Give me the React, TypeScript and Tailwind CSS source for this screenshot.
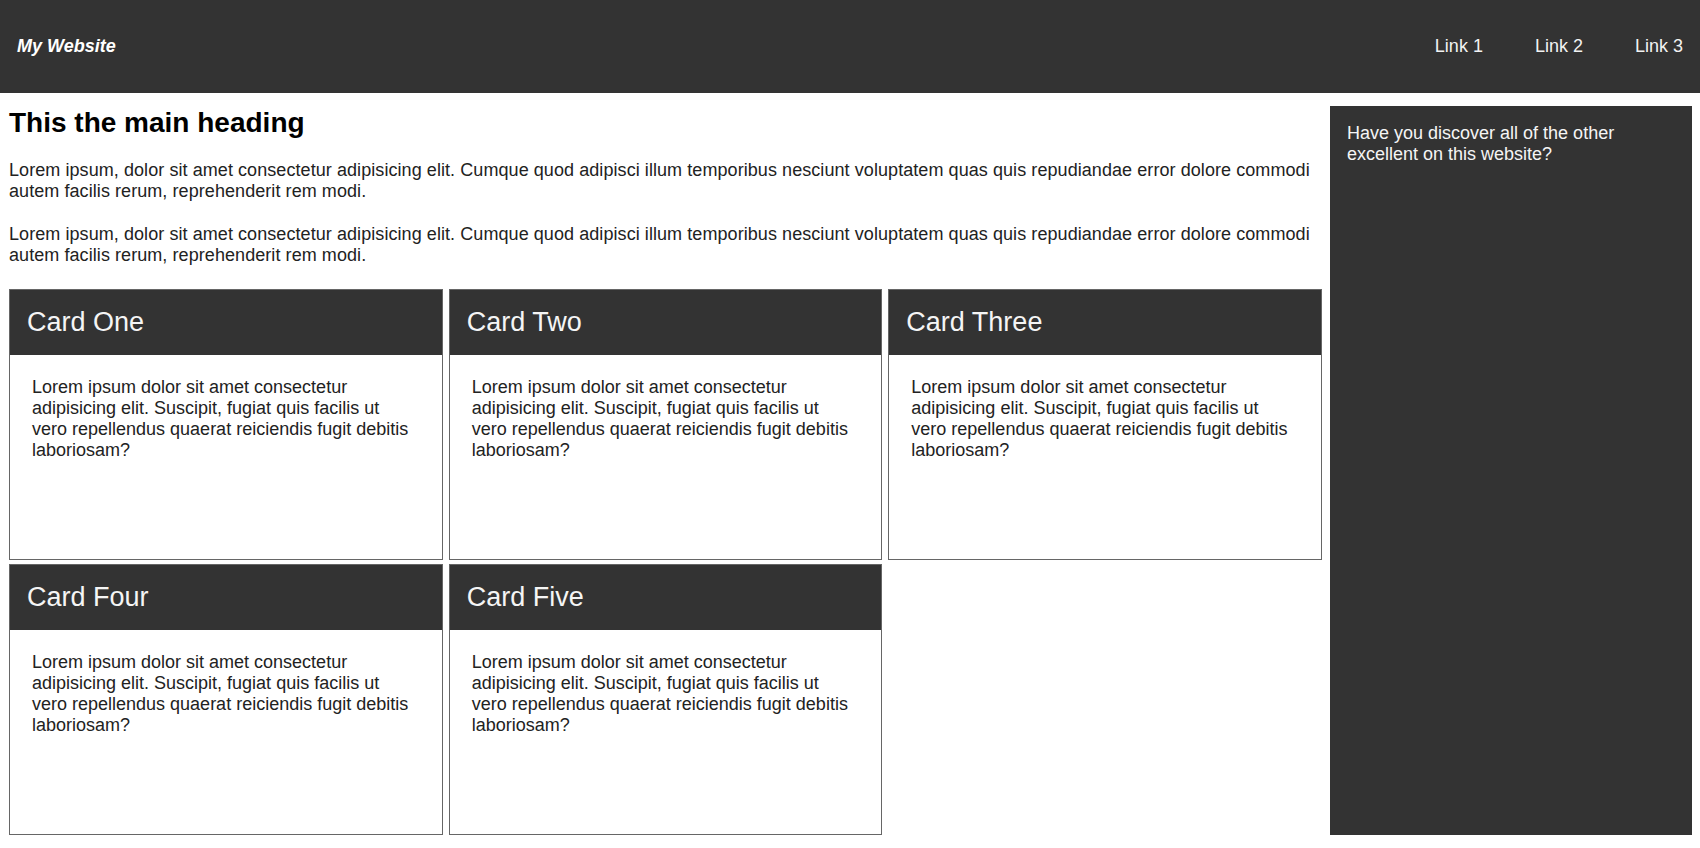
const cards = ['Card One', 'Card Two', 'Card Three', 'Card Four', 'Card Five']

const lorem =
  'Lorem ipsum, dolor sit amet consectetur adipisicing elit. Cumque quod adipisci illum temporibus nesciunt voluptatem quas quis repudiandae error dolore commodi autem facilis rerum, reprehenderit rem modi.'

const cardText =
  'Lorem ipsum dolor sit amet consectetur adipisicing elit. Suscipit, fugiat quis facilis ut vero repellendus quaerat reiciendis fugit debitis laboriosam?'

export default function App() {
  return (
    <div className="min-h-[848px] bg-white font-['Liberation_Sans',Arial,sans-serif] text-[18px] text-[#222]">
      <header className="flex h-[93px] items-center justify-between bg-[#333] pl-[17px] pr-[17px]">
        <div className="text-[18px] font-bold italic text-white">My Website</div>
        <nav className="flex gap-[52px] text-[18px] text-[#f2f2f2]">
          <a href="#">Link 1</a>
          <a href="#">Link 2</a>
          <a href="#">Link 3</a>
        </nav>
      </header>

      <div className="flex gap-[8px] pb-[13px] pl-[9px] pr-[8px] pt-[13px]">
        <main className="min-w-0 flex-1">
          <h2 className="mt-[3px] text-[28px] font-bold leading-[27px] text-black">This the main heading</h2>
          <p className="mt-[24px] leading-[21px] tracking-[0.07px]">{lorem}</p>
          <p className="mt-[22px] leading-[21px] tracking-[0.07px]">{lorem}</p>

          <div className="mt-[23px] grid grid-cols-3 gap-x-[6px] gap-y-[4px]">
            {cards.map((title) => (
              <div key={title} className="h-[271px] border border-[#666] bg-white">
                <div className="bg-[#333] px-[17px] py-[17px] text-[27px] leading-[31px] text-[#f5f5f5]">
                  {title}
                </div>
                <div className="py-[22px] pl-[22px] pr-[26px] leading-[21px] text-[#222]">{cardText}</div>
              </div>
            ))}
          </div>
        </main>

        <aside className="w-[362px] shrink-0 bg-[#333] p-[17px] leading-[21px] text-[#f5f5f5]">
          Have you discover all of the other excellent on this website?
        </aside>
      </div>
    </div>
  )
}
